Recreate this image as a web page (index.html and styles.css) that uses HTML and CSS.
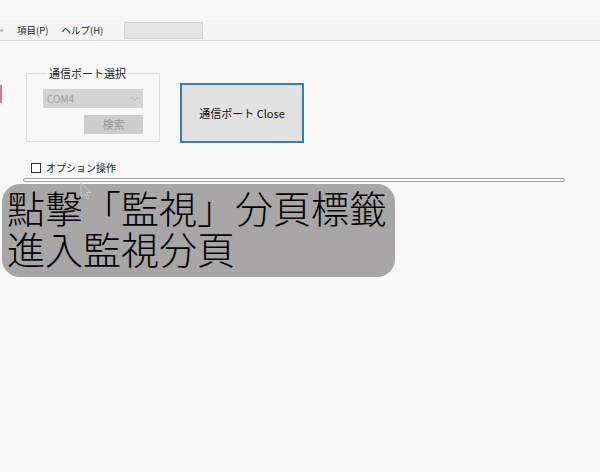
FILE: index.html
```html
<!DOCTYPE html>
<html lang="ja">
<head>
    <meta charset="UTF-8">
    <title>通信ポート</title>
    <link rel="stylesheet" href="styles.css">
</head>
<body>
    <div class="title-gap"></div>
    <div class="menubar">
        <span class="menu-dot"></span>
        <span class="menu-item">項目(P)</span>
        <span class="menu-item">ヘルプ(H)</span>
        <span class="menu-box"></span>
    </div>

    <div class="panel">
        <div class="edge-mark"></div>
        <fieldset class="port-group">
            <legend>通信ポート選択</legend>
            <div class="combo">
                <span>COM4</span>
                <svg class="combo-arrow" width="9" height="6" viewBox="0 0 9 6"><path d="M1 1 L4.5 4.5 L8 1" fill="none" stroke="#b5b5b5" stroke-width="1"/></svg>
            </div>
            <div class="search-btn">検索</div>
        </fieldset>
        <div class="close-btn">通信ポート Close</div>
    </div>

    <div class="option-row">
        <span class="check"></span>
        <span>オプション操作</span>
    </div>
    <div class="separator"></div>

    <div class="caption">
        <div class="caption-line">點擊「監視」分頁標籤</div>
        <div class="caption-line">進入監視分頁</div>
        <svg class="cursor" width="14" height="20" viewBox="0 0 14 20"><path d="M1 1 L1 15 L4.5 11.5 L7 17 L9 16 L6.5 10.5 L11 10.5 Z" fill="none" stroke="#c9c9c9" stroke-width="1"/></svg>
    </div>
</body>
</html>
```

FILE: styles.css
```css
body {
    margin: 0;
    background-color: #f8f8f8;
    font-family: "Noto Sans CJK JP", "Noto Sans", sans-serif;
    font-size: 11px;
    color: #222;
}

.title-gap {
    height: 20px;
}

.menubar {
    height: 20px;
    display: flex;
    align-items: center;
    background-color: #f4f4f4;
    border-bottom: 1px solid #d8d8d8;
}

.menu-dot {
    width: 3px;
    height: 3px;
    border-radius: 50%;
    background-color: #bbb;
    margin-right: 14px;
}

.menu-item {
    margin-right: 13px;
    font-size: 9.5px;
}

.menu-box {
    width: 77px;
    height: 15px;
    margin-left: 8px;
    background-color: #e4e4e4;
    border: 1px solid #d2d2d2;
}

.panel {
    display: flex;
    align-items: flex-start;
    padding-top: 24px;
}

.edge-mark {
    width: 2px;
    height: 18px;
    margin-top: 20px;
    background-color: #e07a7a;
}

.port-group {
    margin: 0 0 0 24px;
    width: 134px;
    padding: 8px 16px 7px 16px;
    border: 1px solid #dedede;
    box-sizing: border-box;
}

.port-group legend {
    padding: 0 2px;
    margin-left: 4px;
    font-size: 11px;
    color: #222;
}

.combo {
    height: 19px;
    width: 100px;
    display: flex;
    align-items: center;
    justify-content: space-between;
    padding: 0 4px;
    box-sizing: border-box;
    background-color: #d3d3d3;
    color: #a2a2a2;
    font-size: 10px;
}

.search-btn {
    width: 59px;
    height: 19px;
    margin: 7px 0 0 41px;
    line-height: 19px;
    text-align: center;
    background-color: #cdcdcd;
    color: #999;
    font-size: 11px;
}

.close-btn {
    margin: 18px 0 0 20px;
    width: 120px;
    height: 56px;
    display: flex;
    align-items: center;
    justify-content: center;
    background-color: #e1e1e1;
    border: 2px solid #3a7db3;
    font-size: 11px;
    color: #111;
}

.option-row {
    display: flex;
    align-items: center;
    gap: 5px;
    margin: 17px 0 0 31px;
    font-size: 10px;
}

.check {
    width: 8px;
    height: 8px;
    border: 1px solid #333;
    background-color: #fff;
}

.separator {
    margin: 3px 0 0 23px;
    width: 540px;
    height: 2px;
    border: 1px solid #9c9c9c;
    border-radius: 2px;
    background-color: #fff;
}

.caption {
    position: relative;
    margin: 2px 0 0 2px;
    width: 393px;
    height: 93px;
    padding: 2px 0 0 5px;
    box-sizing: border-box;
    background-color: #a7a5a5;
    border-radius: 18px;
    font-family: "Noto Sans CJK TC", sans-serif;
    font-size: 38px;
    font-weight: 300;
    color: #000;
}

.caption-line {
    height: 41px;
    line-height: 41px;
}

.cursor {
    position: absolute;
    left: 78px;
    top: -2px;
}
```
